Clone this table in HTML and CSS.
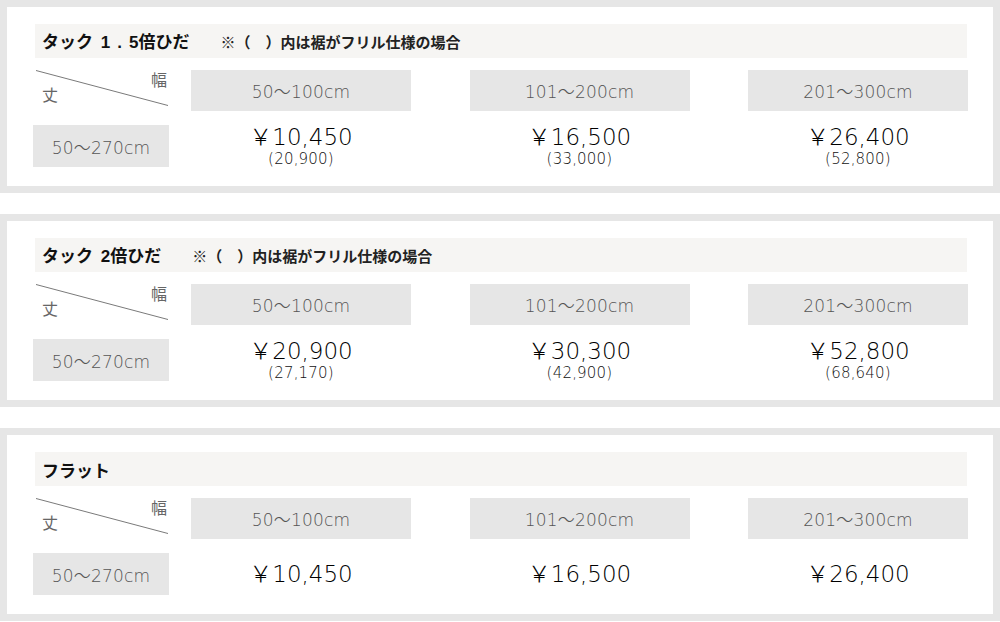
FILE: index.html
```html
<!DOCTYPE html>
<html lang="ja">
<head>
<meta charset="utf-8">
<title>料金表</title>
<link rel="stylesheet" href="styles.css">
</head>
<body>
<div class="page">
  <section class="block">
    <div class="ttl"><span class="name">タック <span class="dec"><span class="ls">1.</span>5</span>倍ひだ</span><span class="note">※（　）内は裾がフリル仕様の場合</span></div>
    <div class="row head">
      <div class="corner"><svg class="diag" viewBox="0 0 136 41" preserveAspectRatio="none"><line x1="3" y1="0.5" x2="135" y2="35.5"/></svg><span class="w">幅</span><span class="h">丈</span></div>
      <div class="cols">
        <div class="range">50〜100cm</div>
        <div class="range">101〜200cm</div>
        <div class="range">201〜300cm</div>
      </div>
    </div>
    <div class="row body">
      <div class="range len">50〜270cm</div>
      <div class="cols">
        <div class="price"><span class="main">￥10,450</span><span class="sub">(20,900)</span></div>
        <div class="price"><span class="main">￥16,500</span><span class="sub">(33,000)</span></div>
        <div class="price"><span class="main">￥26,400</span><span class="sub">(52,800)</span></div>
      </div>
    </div>
  </section>

  <section class="block">
    <div class="ttl"><span class="name">タック <span class="dec">2</span>倍ひだ</span><span class="note">※（　）内は裾がフリル仕様の場合</span></div>
    <div class="row head">
      <div class="corner"><svg class="diag" viewBox="0 0 136 41" preserveAspectRatio="none"><line x1="3" y1="0.5" x2="135" y2="35.5"/></svg><span class="w">幅</span><span class="h">丈</span></div>
      <div class="cols">
        <div class="range">50〜100cm</div>
        <div class="range">101〜200cm</div>
        <div class="range">201〜300cm</div>
      </div>
    </div>
    <div class="row body">
      <div class="range len">50〜270cm</div>
      <div class="cols">
        <div class="price"><span class="main">￥20,900</span><span class="sub">(27,170)</span></div>
        <div class="price"><span class="main">￥30,300</span><span class="sub">(42,900)</span></div>
        <div class="price"><span class="main">￥52,800</span><span class="sub">(68,640)</span></div>
      </div>
    </div>
  </section>

  <section class="block">
    <div class="ttl"><span class="name">フラット</span></div>
    <div class="row head">
      <div class="corner"><svg class="diag" viewBox="0 0 136 41" preserveAspectRatio="none"><line x1="3" y1="0.5" x2="135" y2="35.5"/></svg><span class="w">幅</span><span class="h">丈</span></div>
      <div class="cols">
        <div class="range">50〜100cm</div>
        <div class="range">101〜200cm</div>
        <div class="range">201〜300cm</div>
      </div>
    </div>
    <div class="row body">
      <div class="range len">50〜270cm</div>
      <div class="cols">
        <div class="price"><span class="main">￥10,450</span></div>
        <div class="price"><span class="main">￥16,500</span></div>
        <div class="price"><span class="main">￥26,400</span></div>
      </div>
    </div>
  </section>
</div>
</body>
</html>
```

FILE: styles.css
```css
html, body {
  margin: 0;
  padding: 0;
  background: #ffffff;
}

body {
  font-family: "Noto Sans CJK JP", sans-serif;
  color: #222;
}

.page {
  width: 1000px;
  display: flex;
  flex-direction: column;
  gap: 21px;
}

.block {
  box-sizing: border-box;
  width: 1000px;
  height: 193px;
  border: 7px solid #e6e6e6;
  padding: 17px 25px 0 26px;
}

.ttl {
  height: 34px;
  margin: 0 1px 0 2px;
  padding-left: 7px;
  background: #f6f5f3;
  display: flex;
  align-items: center;
}

.name {
  font-size: 17px;
  font-weight: 700;
  color: #111;
  line-height: 1;
}

.dec {
  font-family: "Liberation Sans", "Noto Sans CJK JP", sans-serif;
  margin-left: 4px;
}

.ls {
  letter-spacing: 7px;
}

.note {
  margin-left: 31px;
  font-size: 15px;
  font-weight: 700;
  color: #222;
  line-height: 1;
}

.row {
  display: flex;
}

.row.head {
  margin-top: 12px;
  height: 41px;
}

.row.body {
  margin-top: 14px;
  height: 42px;
}

.cols {
  flex: 1;
  margin-left: 22px;
  display: flex;
  justify-content: space-between;
}

.range {
  width: 220px;
  background: #e6e6e6;
  display: flex;
  align-items: center;
  justify-content: center;
  font-family: "DejaVu Sans", "Noto Sans CJK JP", sans-serif;
  font-weight: 200;
  font-size: 17px;
  letter-spacing: 0.2px;
  color: #555;
}

.range.len {
  width: 136px;
}

.corner {
  position: relative;
  box-sizing: border-box;
  width: 136px;
  padding: 2px 2px 0 9px;
  display: flex;
  flex-direction: column;
  font-family: "Noto Sans CJK JP", sans-serif;
  font-weight: 400;
  font-size: 16px;
  line-height: 15px;
  color: #666666;
}

.diag {
  position: absolute;
  left: 0;
  top: 0;
  width: 136px;
  height: 41px;
}

.diag line {
  stroke: #7a7a7a;
  stroke-width: 1;
}

.w {
  align-self: flex-end;
  color: #666666;
}

.h {
  align-self: flex-start;
  color: #666666;
}

.price {
  width: 220px;
  display: flex;
  flex-direction: column;
  align-items: center;
  justify-content: center;
  font-family: "DejaVu Sans", "Noto Sans CJK JP", sans-serif;
  font-weight: 200;
}

.main {
  font-size: 23px;
  line-height: 25px;
  color: #000;
}

.sub {
  font-size: 15px;
  line-height: 18px;
  letter-spacing: 0.2px;
  color: #111;
}
```
